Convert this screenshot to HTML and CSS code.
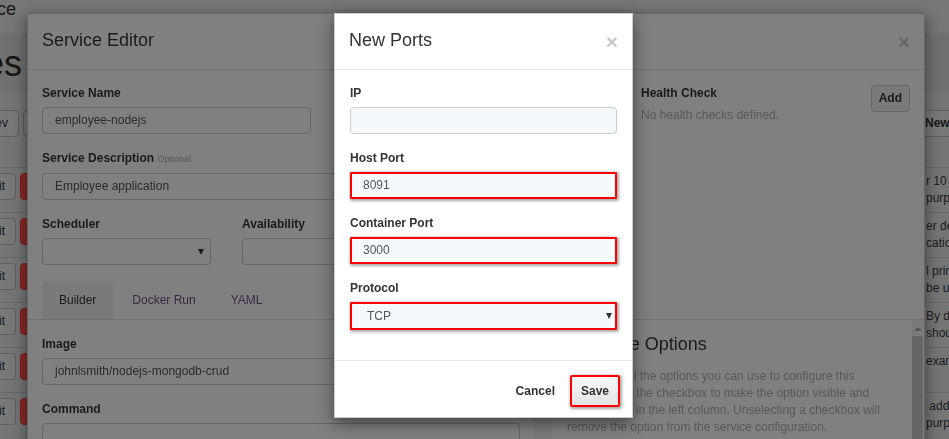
FILE: index.html
```html
<!DOCTYPE html>
<html>
<head>
<meta charset="utf-8">
<link rel="stylesheet" href="styles.css">
</head>
<body>
<div class="page">
  <div class="navbar"><div class="cut brand">Docker Service</div></div>
  <div class="jumbo"><h1 class="cut title">Services</h1></div>
  <div class="toolbar">
    <div class="tb-actions">
      <div class="cut tb-cut"><span class="btn">Prev</span></div>
      <span class="btn gap">Next</span>
    </div>
    <div class="mid"></div>
    <div class="tb-right"><span class="btn bold">New</span></div>
  </div>
  <div class="row"><div class="actions"><div class="cut act-cut"><span class="btn">Edit</span></div><span class="btn btn-danger">Delete</span></div><div class="mid"></div><div class="desc">r 10 minutes<br>purposes only</div></div>
  <div class="row"><div class="actions"><div class="cut act-cut"><span class="btn">Edit</span></div><span class="btn btn-danger">Delete</span></div><div class="mid"></div><div class="desc">er deployment<br>cation tier</div></div>
  <div class="row"><div class="actions"><div class="cut act-cut"><span class="btn">Edit</span></div><span class="btn btn-danger">Delete</span></div><div class="mid"></div><div class="desc">l primary<br>be used</div></div>
  <div class="row"><div class="actions"><div class="cut act-cut"><span class="btn">Edit</span></div><span class="btn btn-danger">Delete</span></div><div class="mid"></div><div class="desc">By default<br>should</div></div>
  <div class="row"><div class="actions"><div class="cut act-cut"><span class="btn">Edit</span></div><span class="btn btn-danger">Delete</span></div><div class="mid"></div><div class="desc">example</div></div>
  <div class="row"><div class="actions"><div class="cut act-cut"><span class="btn">Edit</span></div><span class="btn btn-danger">Delete</span></div><div class="mid"></div><div class="desc">&nbsp;add<br>purpose</div></div>
</div>

<div class="modal editor">
  <div class="m-header">
    <h4 class="m-title">Service Editor</h4>
    <span class="close">×</span>
  </div>
  <div class="m-body">
    <div class="ed-top">
      <div class="ed-left">
        <div class="fg w269">
          <label class="lbl">Service Name</label>
          <div class="input">employee-nodejs</div>
        </div>
        <div class="fg">
          <label class="lbl">Service Description <small class="opt">Optional</small></label>
          <div class="input">Employee application</div>
        </div>
        <div class="fg frow">
          <div class="w169">
            <label class="lbl">Scheduler</label>
            <div class="input select"><span></span><i class="caret"></i></div>
          </div>
          <div class="w200 ml31">
            <label class="lbl">Availability</label>
            <div class="input select"><span></span><i class="caret"></i></div>
          </div>
        </div>
      </div>
      <div class="ed-right">
        <div>
          <label class="lbl hc">Health Check</label>
          <div class="muted">No health checks defined.</div>
        </div>
        <span class="btn-add">Add</span>
      </div>
    </div>
    <div class="tabs">
      <span class="tab active">Builder</span>
      <span class="tab">Docker Run</span>
      <span class="tab">YAML</span>
    </div>
    <div class="tab-content">
      <div class="tc-left">
        <div class="fg">
          <label class="lbl">Image</label>
          <div class="input">johnlsmith/nodejs-mongodb-crud</div>
        </div>
        <div class="fg">
          <label class="lbl">Command</label>
          <div class="input"></div>
        </div>
      </div>
      <div class="gutter"></div>
      <div class="options">
        <div class="opt-inner">
          <h3 class="opt-title">Available Options</h3>
          <p class="opt-text">These are all the options you can use to configure this<br>service. Tick the checkbox to make the option visible and<br>configurable in the left column. Unselecting a checkbox will<br>remove the option from the service configuration.</p>
        </div>
        <div class="scrollbar"><i class="sb-up"></i><div class="sb-thumb"></div></div>
      </div>
    </div>
  </div>
</div>

<div class="modal ports">
  <div class="m-header p-header">
    <h4 class="m-title p-title">New Ports</h4>
    <span class="close p-close">×</span>
  </div>
  <div class="p-body">
    <div class="fg">
      <label class="lbl p-lbl">IP</label>
      <div class="p-input"></div>
    </div>
    <div class="fg">
      <label class="lbl p-lbl">Host Port</label>
      <div class="p-input hl">8091</div>
    </div>
    <div class="fg">
      <label class="lbl p-lbl">Container Port</label>
      <div class="p-input hl">3000</div>
    </div>
    <div class="fg">
      <label class="lbl p-lbl">Protocol</label>
      <div class="p-input hl select proto"><span>TCP</span><i class="caret p-caret"></i></div>
    </div>
  </div>
  <div class="p-footer">
    <span class="btn-link">Cancel</span>
    <span class="btn-save">Save</span>
  </div>
</div>
</body>
</html>
```

FILE: styles.css
```css
/* Everything behind the "New Ports" dialog is shown already dimmed
   by the modal backdrop, so the colours below are the dimmed ones. */
* { box-sizing: border-box; }
html, body { margin: 0; padding: 0; }
body {
  width: 949px;
  height: 439px;
  overflow: hidden;
  font-family: "Liberation Sans", Arial, Helvetica, sans-serif;
  font-size: 12px;
  line-height: 17px;
  color: #181818;
  background: #767676;
}

/* ---------- background page (dimmed) ---------- */
.page { width: 949px; }
.cut { display: flex; justify-content: flex-end; white-space: nowrap; }
.navbar { height: 33px; background: #777; }
.brand { width: 16px; font-size: 18px; line-height: 18px; }
.jumbo { height: 59px; background: #717171; padding-top: 11px; }
.title { width: 22px; margin: 0; font-size: 36px; line-height: 40px; font-weight: normal; color: #161616; }

.btn {
  display: inline-block;
  height: 27px;
  padding: 0 10px;
  border: 1px solid #5f5f5f;
  border-radius: 4px;
  background: #797979;
  color: #181818;
  line-height: 25px;
  white-space: nowrap;
  flex: none;
}
.bold { font-weight: bold; }
.gap { margin-left: 4px; }

.toolbar { height: 75px; display: flex; padding-top: 18px; }
.tb-actions { width: 27px; flex: none; display: flex; }
.tb-cut { width: 19px; flex: none; }
.mid { width: 898px; flex: none; }
.tb-right { flex: 1; display: flex; }
.tb-right .btn { margin-left: -11px; }

.row { height: 45px; border-top: 1px solid #686868; display: flex; }
.actions { width: 27px; flex: none; display: flex; padding-top: 5px; }
.act-cut { width: 16px; flex: none; }
.btn-danger { background: #8a2a25; border-color: #7c2521; color: #777; margin-left: 4px; }
.desc { padding: 5px 0 0 1px; white-space: nowrap; color: #1c1c1c; }

/* ---------- modals ---------- */
.modal {
  position: fixed;
  border: 1px solid rgba(0, 0, 0, 0.2);
  box-shadow: 0 5px 15px rgba(0, 0, 0, 0.5);
}
.m-header {
  height: 56px;
  padding: 14px 14px 0;
  border-bottom: 1px solid #737373;
  display: flex;
  justify-content: space-between;
  align-items: flex-start;
}
.m-title { margin: 0; font-size: 18px; line-height: 25px; font-weight: normal; color: #1a1a1a; }
.close {
  font-size: 21px;
  font-weight: bold;
  line-height: 21px;
  color: #676767;
  margin-top: 3px;
}

/* Service editor (dimmed, behind) */
.editor { left: 27px; top: 13px; width: 898px; height: 460px; background: #808080; }
.m-body { padding: 15px 14px 0; }
.ed-top { display: flex; }
.ed-left { width: 478px; flex: none; }
.ed-right { margin-left: 121px; flex: 1; display: flex; justify-content: space-between; align-items: flex-start; }
.muted { color: #585858; margin-top: 4px; }
.btn-add {
  height: 27px;
  padding: 0 7px;
  border: 1px solid #666;
  border-radius: 4px;
  background: #7a7a7a;
  font-weight: bold;
  line-height: 25px;
  color: #1a1a1a;
}

.fg { margin-bottom: 16px; }
.lbl { display: block; font-weight: bold; line-height: 17px; margin-bottom: 5px; color: #1a1a1a; }
.opt { font-size: 9px; font-weight: normal; color: #555; }
.w269 { width: 269px; }
.frow { display: flex; }
.w169 { width: 169px; flex: none; }
.w200 { width: 200px; flex: none; }
.ml31 { margin-left: 31px; }

.input {
  height: 27px;
  border: 1px solid #666;
  border-radius: 4px;
  padding: 0 12px;
  line-height: 25px;
  color: #2b2b2b;
  background: #808080;
  white-space: nowrap;
}
.select { display: flex; justify-content: space-between; align-items: center; padding-right: 6px; }
.caret {
  width: 0;
  height: 0;
  border-left: 3.5px solid transparent;
  border-right: 3.5px solid transparent;
  border-top: 6px solid #1a1a1a;
}

.tabs {
  margin: 0 -14px;
  padding-left: 14px;
  height: 39px;
  border-bottom: 1px solid #707070;
  display: flex;
}
.tab { padding: 0 16px; line-height: 38px; margin-right: 3px; color: #372942; border-radius: 4px 4px 0 0; }
.tab.active { background: #7a7a7a; color: #1a1a1a; padding: 0 17px; }

.tab-content { display: flex; }
.tc-left { width: 478px; flex: none; padding-top: 16px; }
.gutter { width: 19px; margin-left: 13px; flex: none; background: #7a7a7a; height: 140px; }
.options { margin-right: -14px; flex: 1; display: flex; height: 140px; }
.opt-inner { flex: 1; padding: 13px 0 0 15px; }
.opt-title { margin: 0 0 13px; font-size: 18px; line-height: 22px; font-weight: normal; color: #1a1a1a; }
.opt-text { margin: 0; line-height: 17px; color: #585858; white-space: nowrap; }
.scrollbar { width: 11px; margin-right: 1px; background: #797979; display: flex; flex-direction: column; align-items: center; }
.sb-up {
  margin-top: 7px;
  width: 0; height: 0;
  border-left: 4px solid transparent;
  border-right: 4px solid transparent;
  border-bottom: 4px solid #555;
}
.sb-thumb { margin-top: 5px; width: 11px; flex: 1; background: #666; }

/* ---------- "New Ports" dialog (front, not dimmed) ---------- */
.ports { left: 334px; top: 13px; width: 299px; height: 405px; background: #fff; }
.p-header { border-bottom-color: #e5e5e5; }
.p-title { color: #333; }
.p-close { color: #c8c8c8; }
.p-body { height: 290px; padding: 15px 15px 0; }
.p-lbl { color: #333; }
.p-input {
  height: 27px;
  border: 1px solid #ccc;
  border-radius: 4px;
  padding: 0 12px;
  line-height: 25px;
  color: #555;
  background: #f6f9fc;
  white-space: nowrap;
}
.hl {
  border: 2px solid #ff0000;
  border-radius: 1px;
  padding-left: 11px;
  line-height: 23px;
  box-shadow: 1px 1px 3px 1px rgba(0, 0, 0, 0.35);
}
.proto { height: 28px; padding-left: 15px; padding-right: 3px; }
.p-caret { border-top-color: #333; }
.p-footer {
  height: 57px;
  border-top: 1px solid #e5e5e5;
  padding: 14px 12px 0 15px;
  display: flex;
  justify-content: flex-end;
  align-items: flex-start;
}
.btn-link { font-weight: bold; line-height: 32px; padding: 0 10px; margin-right: 5px; color: #333; }
.btn-save {
  height: 32px;
  padding: 0 9px;
  border: 2px solid #ff0000;
  border-radius: 2px;
  background: linear-gradient(#f7f7f7, #e3e3e3);
  font-weight: bold;
  line-height: 28px;
  color: #333;
  box-shadow: 1px 1px 3px 1px rgba(0, 0, 0, 0.35);
}
```
